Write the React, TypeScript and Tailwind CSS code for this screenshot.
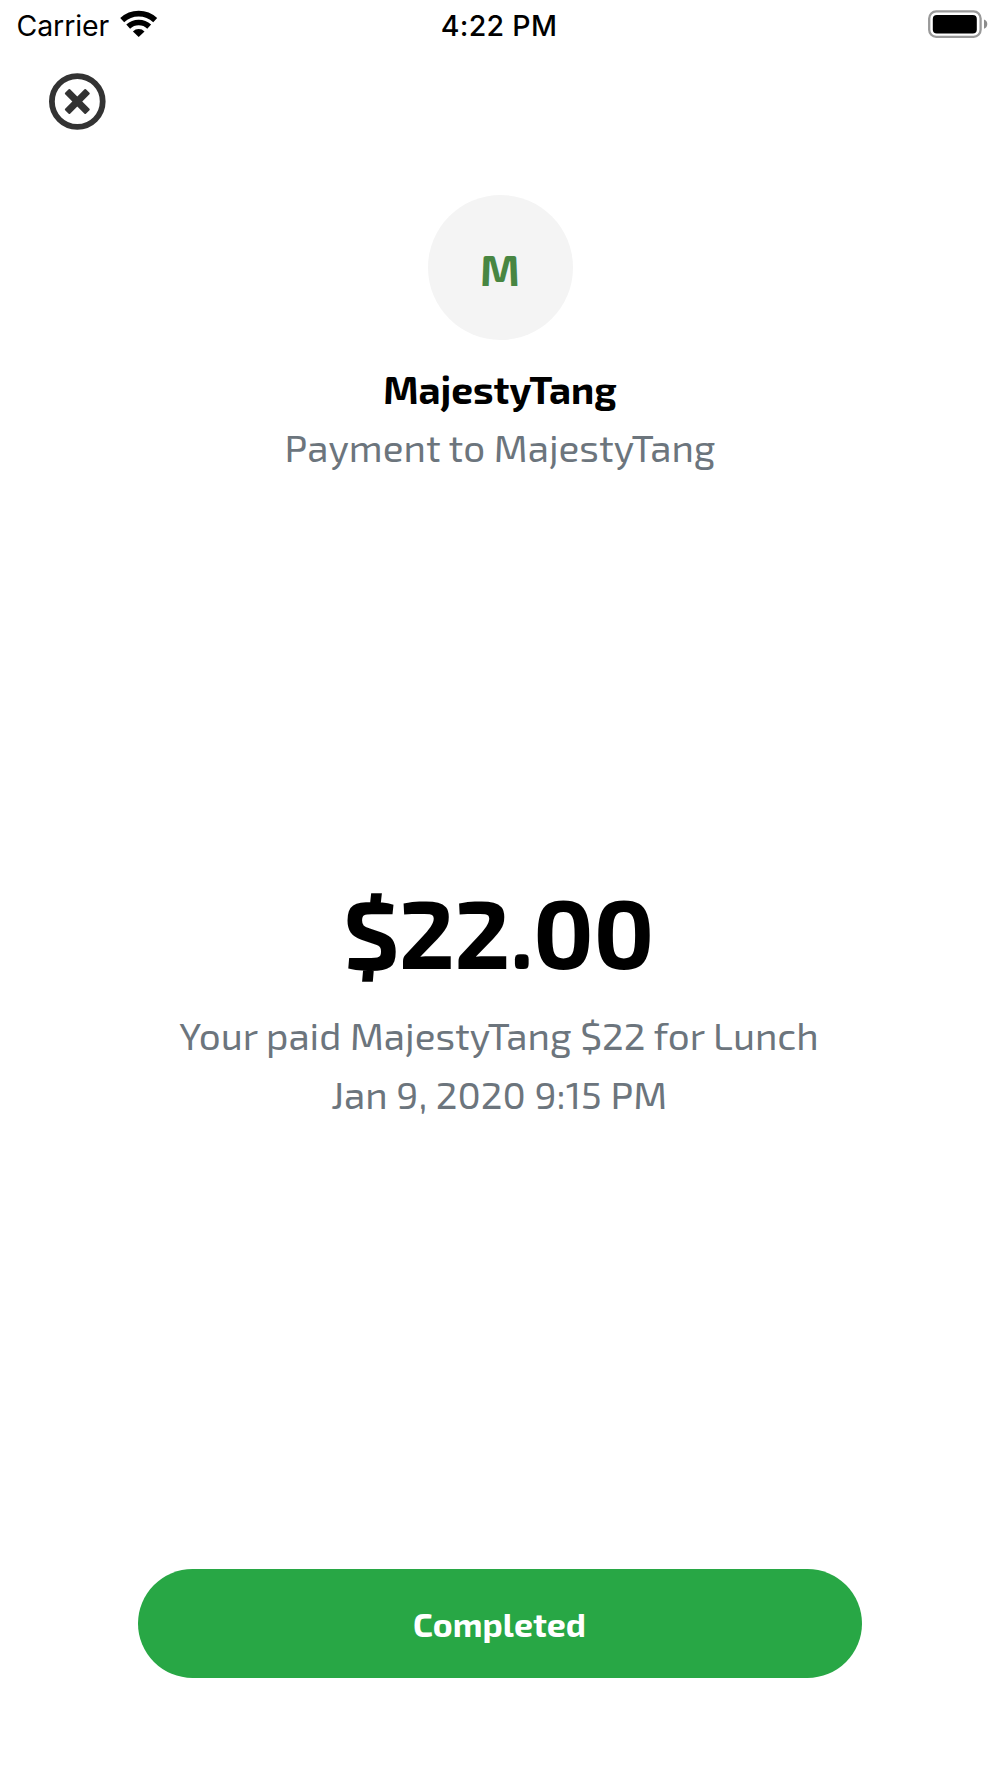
const PAYMENT = {
  name: 'MajestyTang',
  subtitle: 'Payment to MajestyTang',
  amount: '$22.00',
  description: 'Your paid MajestyTang $22 for Lunch',
  date: 'Jan 9, 2020 9:15 PM',
  status: 'Completed'
};

function WifiIcon() {
  return (
    <svg width="38" height="28" viewBox="0 0 38 28" fill="none">
      <path d="M2.2 10.2A24.2 24.2 0 0 1 35.2 10.2" stroke="#000" strokeWidth="5.8" />
      <path d="M8.2 16.6A15.4 15.4 0 0 1 29.2 16.6" stroke="#000" strokeWidth="5.6" />
      <path d="M18.7 27L12.9 21.4A8.2 8.2 0 0 1 24.5 21.4Z" fill="#000" />
    </svg>
  );
}

function BatteryIcon() {
  return (
    <svg width="60" height="28" viewBox="0 0 60 28" fill="none">
      <rect x="1.2" y="1.4" width="51.4" height="25.4" rx="7" stroke="#999" strokeWidth="2.3" />
      <rect x="4.8" y="5" width="44" height="18.4" rx="4" fill="#000" />
      <path d="M56 9.4A5 5 0 0 1 56 18.8Z" fill="#8c8c8c" />
    </svg>
  );
}

function CloseIcon() {
  return (
    <svg width="57" height="57" viewBox="0 0 57 57" fill="none">
      <circle cx="28.3" cy="28.5" r="25.4" stroke="#333" strokeWidth="5.8" />
      <g fill="#333" transform="rotate(45 28.3 28.5)">
        <rect x="13.6" y="25" width="29.4" height="7" rx="1" />
        <rect x="24.8" y="13.8" width="7" height="29.4" rx="1" />
      </g>
    </svg>
  );
}

function StatusBar() {
  return (
    <div className="grid h-12 w-full grid-cols-3 items-start font-['Inter',sans-serif] text-black">
      <div className="flex items-start pl-[16.5px]">
        <span className="mt-[6px] text-[28.5px] leading-[40px] tracking-[-0.1px]">Carrier</span>
        <span className="mt-[10px] ml-[11px]">
          <WifiIcon />
        </span>
      </div>
      <div className="mt-[6px] pr-0.5 text-center text-[28.5px] leading-[40px] font-[550] tracking-[0.3px]">4:22 PM</div>
      <div className="mt-[10px] flex justify-end pr-3">
        <BatteryIcon />
      </div>
    </div>
  );
}

export default function App() {
  return (
    <div className="flex h-[1778px] w-[1000px] flex-col items-center overflow-hidden bg-white font-['Exo_2','Noto_Sans',sans-serif] text-black">
      <StatusBar />
      <div className="flex h-[147px] w-full items-start pt-[25px] pl-[49px]">
        <button type="button" aria-label="Close">
          <CloseIcon />
        </button>
      </div>

      {/* Recipient */}
      <div className="flex h-[145px] w-[145px] items-center justify-center rounded-full bg-[#f4f4f4] pt-1">
        <span className="text-[43.5px] leading-none font-bold text-[#488642]">M</span>
      </div>
      <h1 className="mt-[20px] text-[38.65px] leading-[58px] font-bold whitespace-nowrap">{PAYMENT.name}</h1>
      <p className="text-[38.65px] leading-[58px] whitespace-nowrap text-[#6c757d]">{PAYMENT.subtitle}</p>

      {/* Amount */}
      <div className="mt-[386px] mb-2 pr-[3px] text-[96.6px] leading-[136px] font-bold tracking-[-0.5px] whitespace-nowrap">
        {PAYMENT.amount}
      </div>
      <p className="pr-0.5 text-[38.65px] leading-[58px] whitespace-nowrap text-[#6c757d]">{PAYMENT.description}</p>
      <p className="mt-px pr-0.5 text-[38.65px] leading-[58px] whitespace-nowrap text-[#6c757d]">{PAYMENT.date}</p>

      <button
        type="button"
        className="mt-auto mb-[100px] h-[109px] w-[724px] shrink-0 rounded-full bg-[#28a745] pt-0.5 pr-px text-[33.8px] font-bold text-white"
      >
        {PAYMENT.status}
      </button>
    </div>
  );
}
